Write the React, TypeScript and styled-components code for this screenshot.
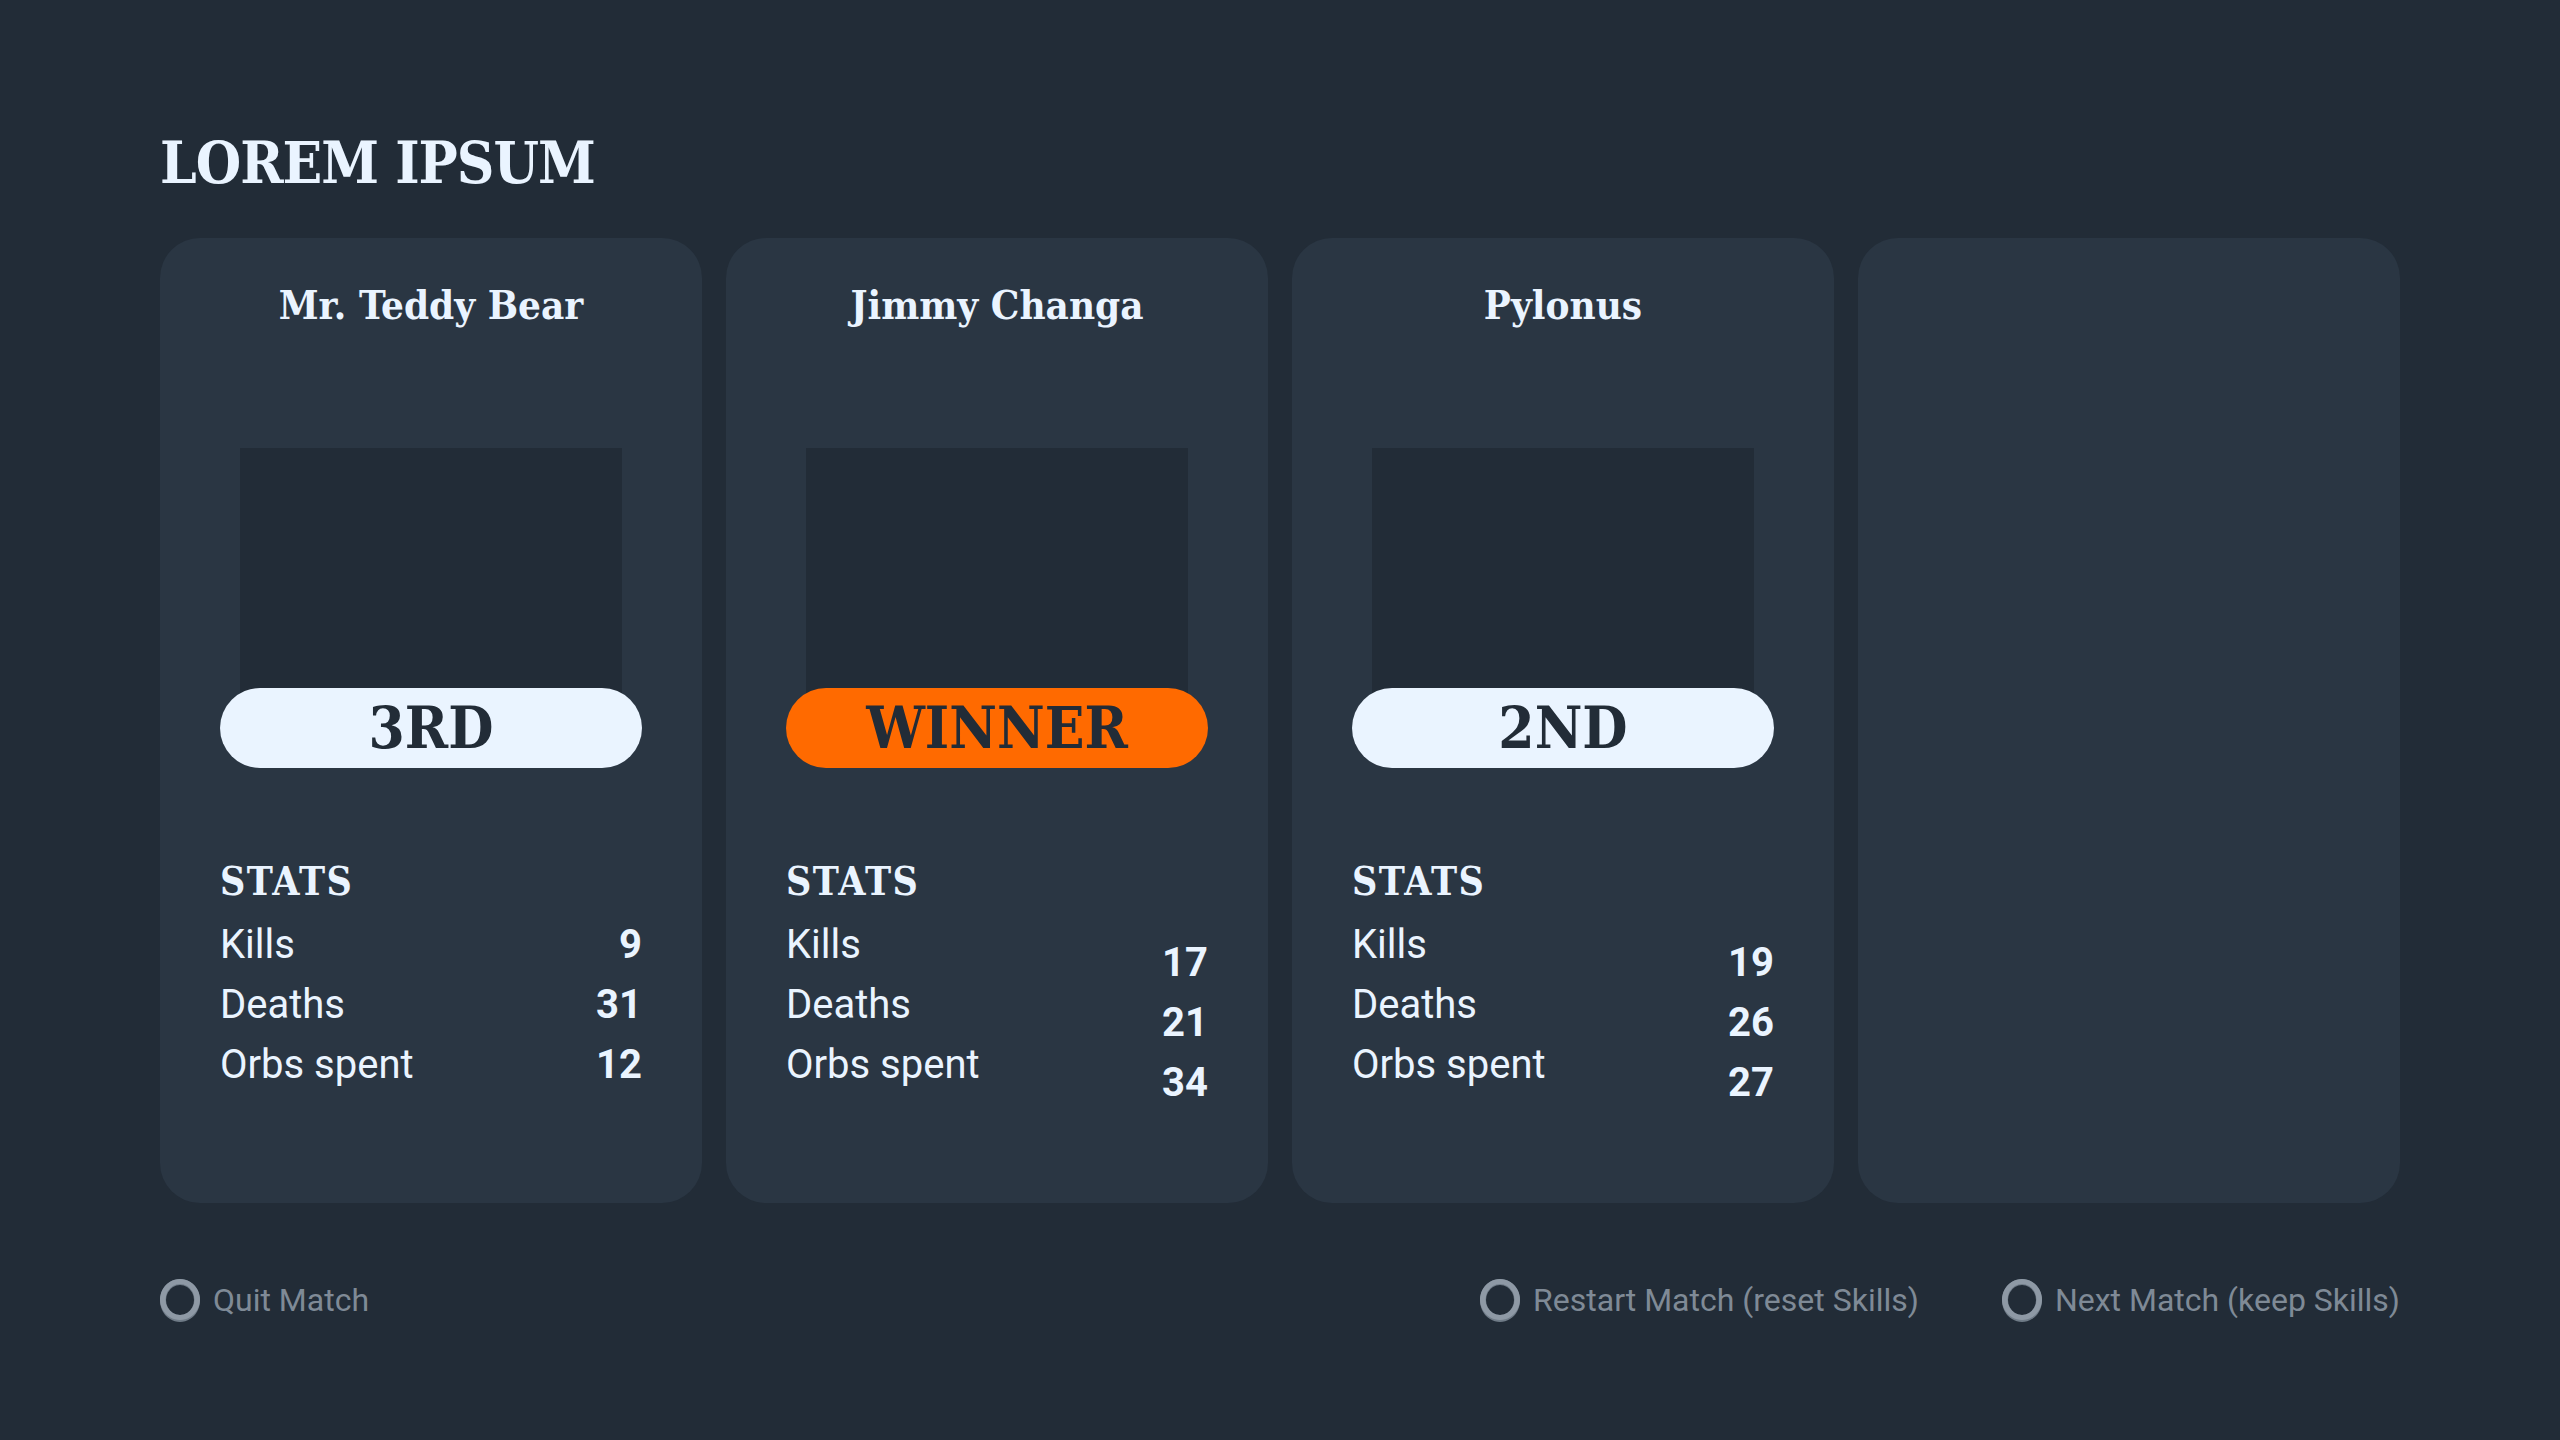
import React from 'react';
import styled, { createGlobalStyle } from 'styled-components';

type Stat = { label: string; value: number };

type Player = {
  name: string;
  place: string;
  winner?: boolean;
  shifted?: boolean;
  stats: Stat[];
};

const players: Player[] = [
  {
    name: 'Mr. Teddy Bear',
    place: '3RD',
    stats: [
      { label: 'Kills', value: 9 },
      { label: 'Deaths', value: 31 },
      { label: 'Orbs spent', value: 12 },
    ],
  },
  {
    name: 'Jimmy Changa',
    place: 'WINNER',
    winner: true,
    shifted: true,
    stats: [
      { label: 'Kills', value: 17 },
      { label: 'Deaths', value: 21 },
      { label: 'Orbs spent', value: 34 },
    ],
  },
  {
    name: 'Pylonus',
    place: '2ND',
    shifted: true,
    stats: [
      { label: 'Kills', value: 19 },
      { label: 'Deaths', value: 26 },
      { label: 'Orbs spent', value: 27 },
    ],
  },
];

const serif = `"DejaVu Serif", "Liberation Serif", serif`;
const sans = `Roboto, "Noto Sans", sans-serif`;

const GlobalStyle = createGlobalStyle`
  html, body {
    margin: 0;
    padding: 0;
    background: #222c37;
  }
  * {
    box-sizing: border-box;
  }
`;

const Ring: React.FC = () => (
  <svg width="40" height="43" viewBox="0 0 40 43">
    <path
      fillRule="evenodd"
      fill="#6f7b87"
      d="M20 0 A20 21.5 0 1 1 19.99 0 Z M20 6 A14 15 0 1 0 20.01 6 Z"
    />
    <path
      fillRule="evenodd"
      fill="#8e99a5"
      d="M20 0 A20 20.5 0 1 1 19.99 0 Z M20 5 A14.5 15.5 0 1 0 20.01 5 Z"
    />
  </svg>
);

const PlayerCard: React.FC<{ player: Player }> = ({ player }) => (
  <Card>
    <Name>{player.name}</Name>
    <Portrait />
    <Badge $winner={!!player.winner}>{player.place}</Badge>
    <StatsTitle>STATS</StatsTitle>
    <StatsTable>
      <LabelCol>
        {player.stats.map((s) => (
          <Label key={s.label}>{s.label}</Label>
        ))}
      </LabelCol>
      <ValueCol $shifted={!!player.shifted}>
        {player.stats.map((s) => (
          <Value key={s.label}>{s.value}</Value>
        ))}
      </ValueCol>
    </StatsTable>
  </Card>
);

export default function App() {
  return (
    <>
      <GlobalStyle />
      <Page>
        <Title>LOREM IPSUM</Title>
        <Cards>
          {players.map((p) => (
            <PlayerCard key={p.name} player={p} />
          ))}
          <Card />
        </Cards>
        <Footer>
          <Action>
            <Ring />
            Quit Match
          </Action>
          <ActionGroup>
            <Action>
              <Ring />
              Restart Match (reset Skills)
            </Action>
            <Action>
              <Ring />
              Next Match (keep Skills)
            </Action>
          </ActionGroup>
        </Footer>
      </Page>
    </>
  );
}

const Page = styled.div`
  width: 2560px;
  height: 1440px;
  padding: 123px 160px 0;
  background: #222c37;
  display: flex;
  flex-direction: column;
`;

const Title = styled.h1`
  margin: 0;
  font-family: ${serif};
  font-stretch: condensed;
  font-weight: 700;
  font-size: 58px;
  letter-spacing: -1px;
  line-height: 80px;
  color: #eaf4ff;
`;

const Cards = styled.div`
  margin-top: 35px;
  display: grid;
  grid-template-columns: repeat(4, 542px);
  gap: 24px;
`;

const Card = styled.div`
  height: 965px;
  border-radius: 40px;
  background: #2a3643;
  padding: 0 60px;
  display: flex;
  flex-direction: column;
  align-items: stretch;
`;

const Name = styled.div`
  margin-top: 43px;
  text-align: center;
  font-family: ${serif};
  font-stretch: condensed;
  font-weight: 700;
  font-size: 40px;
  line-height: 48px;
  color: #eaf4ff;
`;

const Portrait = styled.div`
  margin: 119px auto 0;
  width: 382px;
  height: 280px;
  background: #222c37;
`;

const Badge = styled.div<{ $winner: boolean }>`
  margin-top: -40px;
  height: 80px;
  border-radius: 40px;
  background: ${(p) => (p.$winner ? '#ff6a00' : '#eaf4ff')};
  color: #222c37;
  display: flex;
  align-items: center;
  justify-content: center;
  font-family: ${serif};
  font-stretch: condensed;
  font-weight: 700;
  font-size: 58px;
  line-height: 1;
`;

const StatsTitle = styled.div`
  margin-top: 91px;
  font-family: ${serif};
  font-stretch: condensed;
  font-weight: 700;
  font-size: 39px;
  letter-spacing: 1.5px;
  line-height: 44px;
  color: #eaf4ff;
`;

const StatsTable = styled.div`
  margin-top: 12px;
  display: flex;
  justify-content: space-between;
`;

const LabelCol = styled.div`
  display: flex;
  flex-direction: column;
`;

const ValueCol = styled.div<{ $shifted: boolean }>`
  display: flex;
  flex-direction: column;
  align-items: flex-end;
  padding-top: ${(p) => (p.$shifted ? '18px' : '0')};
`;

const Label = styled.div`
  font-family: ${sans};
  font-weight: 400;
  font-size: 40px;
  line-height: 60px;
  color: #eaf4ff;
`;

const Value = styled(Label)`
  font-weight: 700;
`;

const Footer = styled.div`
  margin-top: 76px;
  display: flex;
  justify-content: space-between;
  align-items: center;
`;

const ActionGroup = styled.div`
  display: flex;
  gap: 83px;
`;

const Action = styled.div`
  display: flex;
  align-items: center;
  gap: 13px;
  font-family: ${sans};
  font-size: 32px;
  line-height: 43px;
  color: #7f8a96;
`;
